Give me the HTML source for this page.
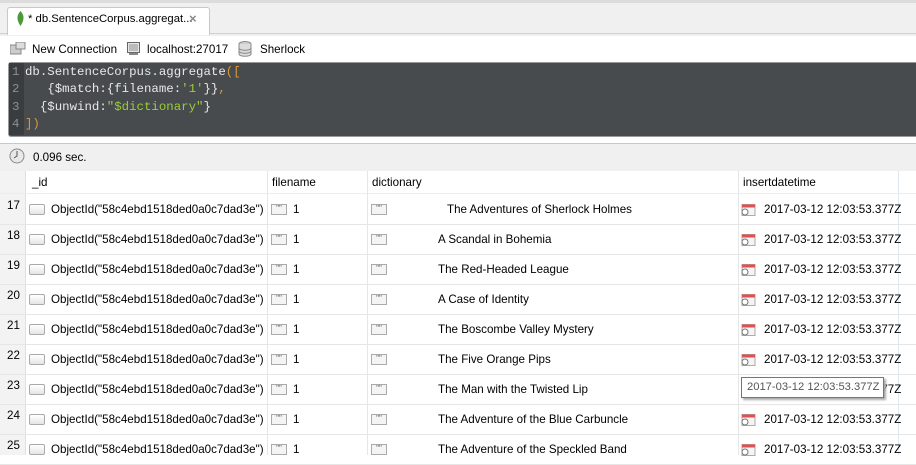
<!DOCTYPE html>
<html><head><style>
body{margin:0;width:916px;height:455px;overflow:hidden;background:#fff;font-family:"Liberation Sans",sans-serif;font-size:11.6px;color:#000;position:relative}
.a{position:absolute;white-space:nowrap}
.code{font-family:"Liberation Mono",monospace;font-size:12.4px;white-space:pre;line-height:17.4px}
.row{position:absolute;left:0;width:916px;height:30px;border-bottom:1px solid #e6e6e6}
.row div{position:absolute;top:1px;height:30px;line-height:30px;white-space:nowrap}
.cb{display:inline-block;width:14px;height:9px;border:1px solid #aaa;border-radius:2px;background:linear-gradient(#fff,#e4e4e4);vertical-align:middle}
.q{display:inline-block;width:14px;height:9px;border:1px solid #aaa;background:#f4f4f4;font-size:8px;line-height:8px;text-align:center;vertical-align:middle;color:#666}
.cal{display:inline-block;width:15px;height:13px;vertical-align:middle}
</style></head><body>
<div class="a" style="left:0;top:0;width:916px;height:33px;background:#f0f0f0;border-top:3px solid #dcdcdc"></div>
<div class="a" style="left:0;top:33px;width:916px;height:1px;background:#d0d0d0"></div>
<div class="a" style="left:7px;top:7px;width:201px;height:27px;background:#fff;border:1px solid #c8c8c8;border-bottom:none;border-radius:3px 3px 0 0"></div>
<svg class="a" style="left:16px;top:11px" width="9" height="16"><path d="M4.5 0 C8 4 9 8 4.5 15 C0 8 1 4 4.5 0Z" fill="#4a9a3a"/></svg>
<div class="a" style="left:28px;top:13px;font-size:11.3px">* db.SentenceCorpus.aggregat...</div>
<div class="a" style="left:189px;top:11px;font-size:13px;color:#888;font-weight:bold">×</div>
<svg class="a" style="left:10px;top:42px" width="16" height="14"><rect x="0" y="3" width="11" height="9" fill="#ccc" stroke="#888"/><rect x="6" y="0" width="9" height="7" fill="#ddd" stroke="#888"/></svg>
<div class="a" style="left:32px;top:43px">New Connection</div>
<svg class="a" style="left:127px;top:42px" width="13" height="14"><rect x="0.5" y="0.5" width="12" height="10" fill="#e8e8e8" stroke="#666"/><rect x="2" y="2" width="9" height="7" fill="#bbb"/><rect x="2" y="11" width="9" height="2" fill="#888"/></svg>
<div class="a" style="left:147px;top:43px">localhost:27017</div>
<svg class="a" style="left:238px;top:41px" width="14" height="16"><ellipse cx="7" cy="3" rx="6" ry="2.5" fill="#ccc" stroke="#888"/><path d="M1 3v10c0 3 12 3 12 0V3" fill="#ddd" stroke="#888"/><path d="M1 7c0 3 12 3 12 0M1 10c0 3 12 3 12 0" fill="none" stroke="#888"/></svg>
<div class="a" style="left:260px;top:43px">Sherlock</div>
<div class="a" style="left:8px;top:62px;width:908px;height:73px;background:#474b4e;border:1px solid #999;border-right:none;border-radius:3px 0 0 3px"></div>
<div class="a" style="left:9px;top:63px;width:15px;height:72px;background:#3a3d3f"></div>
<div class="a code" style="left:12px;top:64px;color:#8c9094">1
2
3
4</div>
<div class="a code" style="left:25px;top:64px;color:#e8e8e8">db.SentenceCorpus.aggregate<span style="color:#d89a3a">([</span>
   {$match:{filename:<span style="color:#9ccc3a">'1'</span>}}<span style="color:#d89a3a">,</span>
  {$unwind:<span style="color:#9ccc3a">"$dictionary"</span>}
<span style="color:#d89a3a">])</span></div>
<div class="a" style="left:0;top:143px;width:916px;height:27px;background:#f0f0f0;border-top:1px solid #c8c8c8;border-bottom:1px solid #d0d0d0"></div>
<svg class="a" style="left:9px;top:148px" width="16" height="16"><circle cx="8" cy="8" r="7" fill="#e8e8e8" stroke="#888"/><path d="M8 3v5l-3 2" stroke="#555" fill="none"/></svg>
<div class="a" style="left:33px;top:151px">0.096 sec.</div>
<div class="a" style="left:0;top:171px;width:916px;height:284px;background:#fff"></div>
<div class="a" style="left:0;top:171px;width:25px;height:284px;background:#f3f3f3;border-right:1px solid #e0e0e0"></div>
<div class="a" style="left:0;top:193px;width:916px;height:1px;background:#e6eefa"></div>
<div class="a" style="left:267px;top:171px;width:1px;height:284px;background:#e6e6e6"></div>
<div class="a" style="left:367px;top:171px;width:1px;height:284px;background:#e6e6e6"></div>
<div class="a" style="left:738px;top:171px;width:1px;height:284px;background:#e6e6e6"></div>
<div class="a" style="left:898px;top:171px;width:1px;height:284px;background:#e0e8f6"></div>
<div class="a" style="left:32px;top:176px">_id</div>
<div class="a" style="left:272px;top:176px">filename</div>
<div class="a" style="left:372px;top:176px">dictionary</div>
<div class="a" style="left:743px;top:176px">insertdatetime</div>
<div id="rows"></div>
<script>
var t=["The Adventures of Sherlock Holmes","A Scandal in Bohemia","The Red-Headed League","A Case of Identity","The Boscombe Valley Mystery","The Five Orange Pips","The Man with the Twisted Lip","The Adventure of the Blue Carbuncle","The Adventure of the Speckled Band"];
var h="",cal='<svg class="cal" viewBox="0 0 15 13"><rect x="1" y="1.5" width="13" height="11" fill="#f4f4f4" stroke="#aaa"/><rect x="1" y="1.5" width="13" height="3" fill="#e05050"/><circle cx="4" cy="9" r="3" fill="#fff" stroke="#777"/></svg>';
for(var i=0;i<9;i++){var y=194+i*30;
h+='<div class="row" style="top:'+y+'px"><div style="left:7px;top:0;line-height:24px">'+(17+i)+'</div><div style="left:29px"><span class="cb"></span></div><div style="left:51px">ObjectId("58c4ebd1518ded0a0c7dad3e")</div><div style="left:271px"><span class="q">""</span></div><div style="left:293px">1</div><div style="left:371px"><span class="q">""</span></div><div style="left:'+(i==0?447:438)+'px">'+t[i]+'</div><div style="left:741px">'+cal+'</div><div style="left:764px">2017-03-12 12:03:53.377Z</div></div>';}
document.getElementById("rows").innerHTML=h;
</script>
<div class="a" style="left:741px;top:377px;width:143px;height:21px;background:#fff;border:1px solid #767676;box-shadow:2px 2px 2px #aaa;line-height:19px;color:#555;padding-left:5px;box-sizing:border-box;font-size:11.2px">2017-03-12 12:03:53.377Z</div>
</body></html>
